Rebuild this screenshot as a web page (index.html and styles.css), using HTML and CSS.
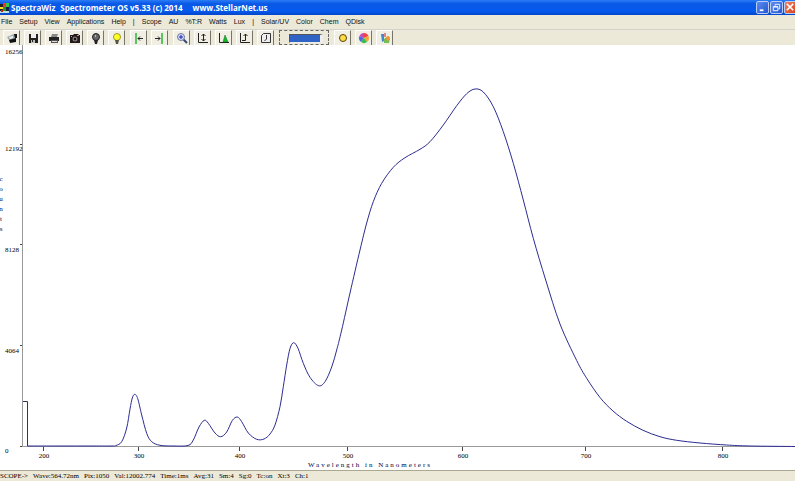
FILE: index.html
```html
<!DOCTYPE html>
<html lang="en">
<head>
	<meta charset="UTF-8">
	<title>SpectraWiz</title>
	<link rel="stylesheet" href="styles.css">
	<script src="chart.js" defer></script>
</head>
<body>
	<div class="wrap">
		<header class="title">
			<svg class="logo" viewBox="0 0 10 12"><path fill="#222" d="M0 2h4v9H0z"/><path fill="#e33" d="M3 1h3v4H3z"/><path fill="#3c4" d="M6 1h3v4H6z"/><path fill="#fd3" d="M0 5h3v2H0z"/><path fill="#293" d="M3 5h3v4H3z"/><path fill="#124" d="M6 5h3v4H6z"/><path fill="#bdd" d="M0 9h9v2H0z"/><path fill="#c22" d="M1 8h2v2H1z"/></svg>
			<h1><span>SpectraWiz</span><span>Spectrometer OS v5.33 (c) 2014</span><span class="site">www.StellarNet.us</span></h1>
			<div class="win">
				<button aria-label="Minimize"><svg viewBox="0 0 12 12"><path fill="#fff" d="M3 8h4v2H3z"/></svg></button>
				<button aria-label="Restore"><svg viewBox="0 0 12 12"><path fill="none" stroke="#fff" d="M4.500 4V2.500h5v5H8M2.500 5h5v4.500h-5zM2.500 5.500h5"/></svg></button>
				<button class="close" aria-label="Close"><svg viewBox="0 0 12 12"><path fill="none" stroke="#fff" stroke-width="1.700" d="M2 2l7 7M9 2L2 9"/></svg></button>
			</div>
		</header>
		<nav class="menu">
			<button>File</button>
			<button>Setup</button>
			<button>View</button>
			<button>Applications</button>
			<button>Help</button>
			<i>|</i>
			<button>Scope</button>
			<button>AU</button>
			<button>%T:R</button>
			<button>Watts</button>
			<button>Lux</button>
			<i>|</i>
			<button>Solar/UV</button>
			<button>Color</button>
			<button>Chem</button>
			<button>QDisk</button>
		</nav>
		<div class="tools">
			<div class="group">
				<button aria-label="Open"><svg viewBox="0 0 12 12"><path fill="#9aa" d="M1 5l7-3 2 2v4H3z"/><path fill="#111" d="M3 8l7-2v4l-6 1zM8 2h3v4H9z"/><path fill="#eee" d="M3 5l4-1v2L4 7z"/></svg></button>
				<button aria-label="Save"><svg viewBox="0 0 12 12"><path fill="#222" d="M2 2h9v9H2z"/><path fill="#eee" d="M4 2h5v4H4z"/><path fill="#bbb" d="M4 8h4v3H4z"/><path fill="#222" d="M5 8h1v2H5z"/></svg></button>
				<button aria-label="Print"><svg viewBox="0 0 12 12"><path fill="#888" d="M4 2h6L9 5H3z"/><path fill="#222" d="M1 5h10v4H1z"/><path fill="#555" d="M3 8h7v3H3z"/><path fill="#ddd" d="M4 9h5v1H4z"/></svg></button>
				<button aria-label="Snapshot"><svg viewBox="0 0 12 12"><path fill="#221a1a" d="M1 3h3l1-1h4l1 1h1v8H1z"/><circle cx="6" cy="7" r="2.500" fill="#877"/><circle cx="6" cy="7" r="1.200" fill="#111"/><path fill="#c99" d="M8 3h2v1H8zM2 4h1v1H2z"/></svg></button>
				<button aria-label="Lamp off"><svg viewBox="0 0 12 12"><circle cx="6" cy="5" r="3.500" fill="#666" stroke="#222"/><path fill="#222" d="M4 8h4l-1 4H5z"/><path fill="#bbb" d="M5 3h1v2H5z"/></svg></button>
				<button aria-label="Lamp on"><svg viewBox="0 0 12 12"><circle cx="6" cy="5" r="3.500" fill="#ff2" stroke="#993"/><path fill="#554" d="M4 8h4l-1 4H5z"/><path fill="#fff" d="M4 3h1v2H4z"/></svg></button>
			</div>
			<div class="group">
				<button aria-label="Cursor left"><svg viewBox="0 0 12 12"><path stroke="#2b3" stroke-width="1.500" d="M3 1v11"/><path fill="none" stroke="#222" d="M10 6.500H5M7 4.500l-2 2 2 2"/></svg></button>
				<button aria-label="Cursor right"><svg viewBox="0 0 12 12"><path stroke="#2b3" stroke-width="1.500" d="M8 1v11"/><path fill="none" stroke="#222" d="M1 6.500h5M4 4.500l2 2-2 2"/></svg></button>
			</div>
			<div class="group">
				<button aria-label="Zoom"><svg viewBox="0 0 12 12"><path stroke="#347" stroke-width="2" d="M7 7l4 4"/><circle cx="5" cy="5" r="3.500" fill="#cdf" stroke="#779"/><path stroke="#22a" d="M3 5h4M5 3v4"/></svg></button>
				<button aria-label="Scale"><svg viewBox="0 0 12 12"><path fill="none" stroke="#222" d="M1.500 1v9.500H11M6.500 2v7M4.500 4l2-2 2 2M4.500 7l2 2 2-2"/></svg></button>
				<button aria-label="Peak"><svg viewBox="0 0 12 12"><path fill="none" stroke="#222" d="M1.500 1v9.500H11"/><path fill="#1b2" stroke="#163" stroke-width=".5" d="M5 10l2-7 3 7z"/></svg></button>
				<button aria-label="Autoscale"><svg viewBox="0 0 12 12"><path fill="none" stroke="#222" d="M1.500 1v9.500H11M3 8.500h3.500V2M4.500 4l2-2 2 2"/></svg></button>
				<button aria-label="Timer"><svg viewBox="0 0 12 12"><path fill="#eee" stroke="#333" d="M3.500 1.500h7v9h-9v-7z"/><path fill="none" stroke="#333" d="M6.500 3v4l-2 2"/></svg></button>
			</div>
			<label class="pick"><select aria-label="Trace"><option></option></select></label>
			<div class="group">
				<button aria-label="Sun"><svg viewBox="0 0 12 12"><circle cx="6" cy="6" r="3.500" fill="#fd4" stroke="#541"/></svg></button>
				<button aria-label="Colour"><svg viewBox="0 0 12 12"><path fill="#e44" d="M6 6V1a5 5 0 0 1 4.500 3z"/><path fill="#ea3" d="M6 6l4.500-2a5 5 0 0 1-1.500 6z"/><path fill="#c4b" d="M6 6V1a5 5 0 0 0-4.500 3z"/><path fill="#56d" d="M6 6L1.500 4A5 5 0 0 0 3 10z"/><path fill="#3b5" d="M6 6l-3 4a5 5 0 0 0 6 0z"/></svg></button>
				<button aria-label="Samples"><svg viewBox="0 0 12 12"><path fill="#48c" d="M2 2h3v7l-2 1z"/><path fill="#d88" d="M5 1h2v4H5z"/><path fill="#7b5" d="M5 7l4-3 2 2-1 5H5z"/><path fill="#e93" d="M7 5l3-1 1 4-3 1z"/></svg></button>
			</div>
		</div>
		<section class="plot">
			<svg viewBox="0 44 795 426" role="img" aria-label="Wavelength in Nanometers">
				<g class="axis">
					<path d="M22.500 45v402M22 446.500h773"/>
					<path class="tick" d="M20 144.500h2M20 244.500h2M20 345.500h2M20 446.500h2M43.500 447v4M138.500 447v4M239.500 447v4M347.500 447v4M462.500 447v4M585.500 447v4M722.500 447v4"/>
				</g>
				<g class="num">
					<text x="5" y="54">16256</text>
					<text x="5" y="151">12192</text>
					<text x="5" y="252">8128</text>
					<text x="5" y="353">4064</text>
					<text x="5" y="453">0</text>
				</g>
				<g class="num nm">
					<text x="44" y="458">200</text>
					<text x="139" y="458">300</text>
					<text x="240" y="458">400</text>
					<text x="348" y="458">500</text>
					<text x="463" y="458">600</text>
					<text x="586" y="458">700</text>
					<text x="723" y="458">800</text>
				</g>
				<g class="side">
					<text x="1" y="181">c</text>
					<text x="1" y="191">o</text>
					<text x="1" y="201">u</text>
					<text x="1" y="211">n</text>
					<text x="1" y="221">t</text>
					<text x="1" y="231">s</text>
				</g>
				<text class="name" x="308" y="467">Wavelength in Nanometers</text>
				<path class="edge" d="M23 401.500h4.500V446"/>
				<path class="curve" id="curve"/>
			</svg>
		</section>
		<footer class="status">
			<span>SCOPE-&gt;</span>
			<span>Wave:564.72nm</span>
			<span>Pix:1050</span>
			<span>Val:12002.774</span>
			<span>Time:1ms</span>
			<span>Avg:31</span>
			<span>Sm:4</span>
			<span>Sg:0</span>
			<span>Tc:on</span>
			<span>Xt:3</span>
			<span>Ch:1</span>
		</footer>
	</div>
</body>
</html>
```
FILE: styles.css
```css
*{
	margin: 0;
	padding: 0;
	box-sizing: border-box;
}
body{
	background: #fff;
	font-family: "Liberation Sans",Arial,sans-serif;
}
button{
	border: 0;
	background: none;
	font: inherit;
	color: inherit;
}
.wrap{width:100%;overflow: hidden;}
.title{
	display: flex;
	align-items: center;
	height: 15px;
	background: linear-gradient(#2a7cf5,#0a58e6 25%,#0559ee 75%,#0447c8);
	color: #fff;
}
.logo{
	width: 10px;
	height: 12px;
	margin-right: 1px;
}
.title h1{
	flex: 1;
	display: flex;
	gap: 5px;
	font: bold 8px/16px "Open Sans","Noto Sans",sans-serif;
	white-space: nowrap;
}
.title .site{margin-left: 5px;}
.win{
	display: flex;
	gap: 1px;
	margin-right: -2px;
}
.win button{
	width: 13px;
	height: 13px;
	border: 1px solid #b9cdf8;
	border-radius: 2px;
	background: linear-gradient(135deg,#5c8cf0,#2456d0);
}
.win .close{
	background: linear-gradient(135deg,#f08060,#d8401c);
}
.win svg{
	display: block;
	width: 100%;
	height: 100%;
}
.menu{
	display: flex;
	gap: 7px;
	height: 15px;
	padding-left: 1px;
	background: #ece9d8;
	border-bottom: 1px solid #d2d4cc;
	font-size: 7px;
	line-height: 14px;
	color: #111;
	white-space: nowrap;
}
.menu i{
	width: 2px;
	font-style: normal;
	text-align: center;
}
.tools{
	display: flex;
	gap: 5px;
	height: 15px;
	margin-bottom: -1px;
	padding-left: 3px;
	background: #ece9d8;
}
.group{
	display: flex;
	gap: 4px;
}
.group button{
	width: 17px;
	height: 15px;
	padding: 1px 2px;
	background: #f1efe4;
	border-top: 1px solid #fff;
	border-left: 1px solid #fff;
	border-right: 1px solid #77756a;
}
.group svg{
	display: block;
	width: 12px;
	height: 12px;
}
.pick{
	width: 50px;
	height: 15px;
	padding: 3px 5px 2px 9px;
	border: 1px dashed #666;
}
.pick select{
	display: block;
	appearance: none;
	width: 100%;
	height: 9px;
	border: 1px solid #eee;
	border-top-color: #555;
	border-left-color: #555;
	border-right-width: 3px;
	background: #2f63c5;
}
.plot svg{
	display: block;
	width: 100%;
	height: auto;
}
.axis path{
	fill: none;
	stroke: #999;
}
.axis .tick{stroke: #444;}
.num{
	font: 7px "Liberation Serif",serif;
	fill: #000;
}
.nm,.side{text-anchor: middle;}
.side,.name{
	font: 7px "Liberation Serif",serif;
	fill: #000040;
}
.name{letter-spacing: 2px;}
.edge{
	fill: none;
	stroke: #335;
}
.curve{
	fill: none;
	stroke: #2c2c90;
}
.status{
	display: flex;
	gap: 5px;
	height: 11px;
	overflow: hidden;
	background: #ece9d8;
	border-top: 1px solid #aaa890;
	font: 7px/10px "Liberation Serif",serif;
	color: #000;
	white-space: nowrap;
}
```
FILE: chart.js
```js
var aPoint=[
	[27.5,446],[60,446],[90,446],[112,446],[116,445.5],[121.7,441.7],[126.7,428],[130,409],[132.3,398],[134.7,394.3],
	[137.7,398.5],[141.7,415],[146.7,433.3],[151.7,441.7],[160,445.3],[173,446],[188,445.5],[193.3,440],[199,427],
	[204.3,420.3],[208.3,423.3],[215,433],[220.7,436.7],[226.7,432],[232.3,420.5],[237.3,417],[241.7,421.7],
	[248.3,433],[256.7,439.3],[264,439],[270,434],[275,425],[280,406.7],[283.3,386.7],[286.7,365],[290,348.5],
	[293.7,342.7],[298,348.3],[303.3,363.3],[310,377.3],[318.5,385.7],[325,381.7],[331.7,367],[336.7,350],
	[341.7,330],[350,293],[360,250],[366.7,223],[373.3,201.7],[381.7,183.3],[393.3,167.3],[405,157.7],[420,149.3],
	[430,141.7],[443.3,125],[456.7,105.7],[466.7,93.7],[475,89],[483.3,92],[493.3,106.7],[503.3,131.7],
	[513.3,163.3],[523.3,200],[533.3,238.3],[545.7,280],[560,324],[576.7,360.5],[586.7,378.3],[600,397.5],
	[613,411],[626.7,421.3],[643,430.3],[660,436.7],[676.7,440.3],[700,443],[726.7,445],[750,446],[795,446.5]
];

//smooth line through the samples
function fnCurve(a){
	var d='M'+a[0];
	for(var i=0;i<a.length-1;i++){
		var p0=a[i-1]||a[i];
		var p1=a[i];
		var p2=a[i+1];
		var p3=a[i+2]||p2;
		d+='C'+[
			p1[0]+(p2[0]-p0[0])/6,p1[1]+(p2[1]-p0[1])/6,
			p2[0]-(p3[0]-p1[0])/6,p2[1]-(p3[1]-p1[1])/6,
			p2[0],p2[1]
		];
	}
	return d;
}

document.querySelector('#curve').setAttribute('d',fnCurve(aPoint));
```
